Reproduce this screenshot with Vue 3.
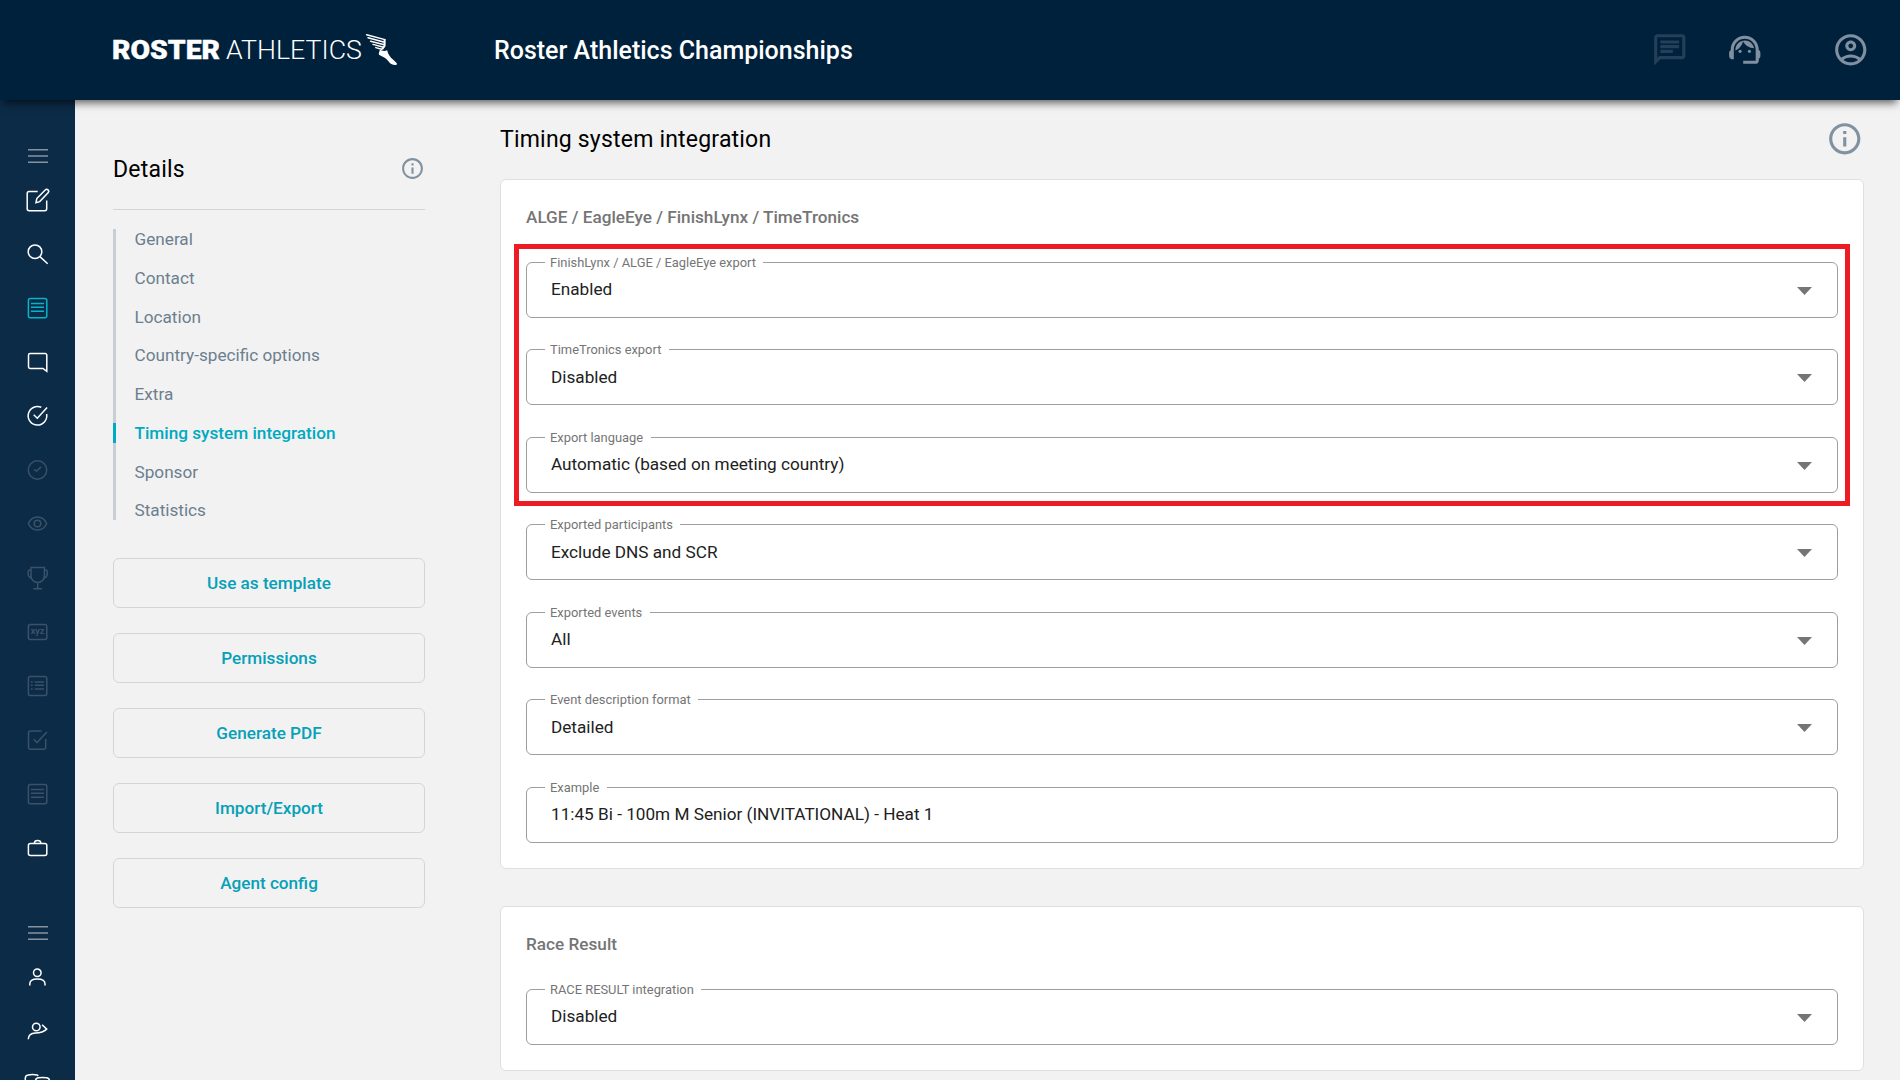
<template>
  <div class="app">
    <header class="topbar">
      <svg class="logo" width="290" height="40" viewBox="0 0 290 40" role="img" aria-label="Roster Athletics">
        <text class="logo-bold" x="-1" y="29.3" textLength="108" lengthAdjust="spacingAndGlyphs">ROSTER</text>
        <text class="logo-light" x="113" y="29.3" textLength="136" lengthAdjust="spacingAndGlyphs">ATHLETICS</text>
        <g transform="translate(253 4)">
          <path
            d="M.6.7 19 5.6M2 3.7l16.5 4.6M4.6 7.2l13.6 3.6M7 10.4l10.6 2.9M9.8 13.6l6 1.6"
            fill="none"
            stroke="#fff"
            stroke-width="1.5"
            stroke-linecap="round"
          />
          <path d="M18.6 5.4v6.4l-2.4 3.4" fill="none" stroke="#fff" stroke-width="2" />
          <path d="M14 15.8c2.4 1.4 5 1.5 7.2.4.6 4 3 7 6.4 9.8l3.2 3.2c.4 1.400-.6 2-2.200 1.800-3.200-.2-4.800-1.800-6.400-4-2.200-3-5.200-4-9.200-6.200-.8-1 .6-3.200.8-5z" fill="#fff" />
        </g>
      </svg>
      <h1 class="meeting-title">Roster Athletics Championships</h1>
      <nav class="topbar-actions">
        <svg class="top-icon dimmed" viewBox="0 0 24 24"><path :d="topIcons.chat" /></svg>
        <svg class="top-icon support" viewBox="0 0 24 24">
          <path :d="topIcons.support" />
          <circle cx="9" cy="13" r="1" />
          <circle cx="15" cy="13" r="1" />
        </svg>
        <svg class="top-icon" viewBox="0 0 24 24"><path :d="topIcons.account" /></svg>
      </nav>
    </header>

    <div class="body">
      <aside class="rail">
        <a v-for="(item, i) in railItems" :key="i" class="rail-item" :class="item.state">
          <svg width="30" height="30" viewBox="-0.5 0 30 30">
            <path :d="item.d" />
            <text v-if="item.text" x="15" y="17" text-anchor="middle">{{ item.text }}</text>
          </svg>
        </a>
      </aside>

      <section class="details">
        <div class="details-head">
          <h2>Details</h2>
          <svg class="info-small" viewBox="0 0 24 24"><path :d="topIcons.info" /></svg>
        </div>
        <ul class="details-nav">
          <li v-for="name in sections" :key="name" :class="{ active: name === activeSection }">
            <a>{{ name }}</a>
          </li>
        </ul>
        <div class="details-actions">
          <button v-for="action in actions" :key="action" type="button">{{ action }}</button>
        </div>
      </section>

      <main class="content">
        <div class="content-head">
          <h2>{{ activeSection }}</h2>
          <svg class="info-large" viewBox="0 0 24 24"><path :d="topIcons.info" /></svg>
        </div>

        <div v-for="card in cards" :key="card.title" class="card">
          <h3>{{ card.title }}</h3>
          <div class="fields">
            <div v-for="field in card.fields" :key="field.label" class="field">
              <label>{{ field.label }}</label>
              <span class="value">{{ field.value }}</span>
              <svg v-if="!field.readonly" class="arrow" width="15" height="8" viewBox="0 0 15 8">
                <path d="M0 0h15L7.5 8z" />
              </svg>
            </div>
          </div>
          <div v-if="card.highlight" class="highlight"></div>
        </div>
      </main>
    </div>
  </div>
</template>

<script setup>
import { ref } from "vue";

const activeSection = ref("Timing system integration");

const sections = [
  "General",
  "Contact",
  "Location",
  "Country-specific options",
  "Extra",
  "Timing system integration",
  "Sponsor",
  "Statistics",
];

const actions = ["Use as template", "Permissions", "Generate PDF", "Import/Export", "Agent config"];

const cards = [
  {
    title: "ALGE / EagleEye / FinishLynx / TimeTronics",
    highlight: true,
    fields: [
      { label: "FinishLynx / ALGE / EagleEye export", value: "Enabled" },
      { label: "TimeTronics export", value: "Disabled" },
      { label: "Export language", value: "Automatic (based on meeting country)" },
      { label: "Exported participants", value: "Exclude DNS and SCR" },
      { label: "Exported events", value: "All" },
      { label: "Event description format", value: "Detailed" },
      { label: "Example", value: "11:45 Bi - 100m M Senior (INVITATIONAL) - Heat 1", readonly: true },
    ],
  },
  {
    title: "Race Result",
    fields: [{ label: "RACE RESULT integration", value: "Disabled" }],
  },
];

const circle = (cx, cy, r) => `M${cx - r} ${cy}a${r} ${r} 0 1 0 ${2 * r} 0a${r} ${r} 0 1 0 ${-2 * r} 0z`;
const box = (x, y, w, h, r = 2) =>
  `M${x + r} ${y}h${w - 2 * r}a${r} ${r} 0 0 1 ${r} ${r}v${h - 2 * r}a${r} ${r} 0 0 1 ${-r} ${r}` +
  `h${2 * r - w}a${r} ${r} 0 0 1 ${-r} ${-r}v${2 * r - h}a${r} ${r} 0 0 1 ${r} ${-r}z`;

const menuPath = "M5.5 8.7h20M5.5 15h20M5.5 21.3h20";
const sheetPath = box(5.9, 5.6, 18.4, 19.2) + "M8.5 10.5h13M8.5 14.2h13M8.5 18.3h13";

const railItems = [
  { state: "menu", d: menuPath },
  {
    d: "M15.2 6.5H6.6a1.9 1.9 0 0 0-1.9 1.9v15.4a1.9 1.9 0 0 0 1.9 1.9h15.7a1.9 1.9 0 0 0 1.9-1.9V15.5M13.5 17.7l.8-4.2L22.7 5a1.9 1.9 0 0 1 2.9 2.7L17.2 16.6z",
  },
  { d: circle(12.5, 12.7, 6.8) + "M17.4 17.6l7.8 7.1" },
  { state: "active", d: sheetPath },
  { d: "M24.3 24.3V8.2a1.6 1.6 0 0 0-1.6-1.6H7.6A1.6 1.6 0 0 0 6 8.2v11.6a1.6 1.6 0 0 0 1.6 1.6h12.8z" },
  { d: "M18.8 6.3A9.3 9.3 0 1 0 24.1 13M11.2 13.8l3.6 3.4L24.6 6.6" },
  { state: "disabled", d: circle(15, 15, 9.2) + "M11.5 14.5l2.8 1.6 4.3-4.3" },
  {
    state: "disabled",
    d: circle(15, 14.5, 3.3) + "M5.8 14.5c1.8-4 5-6.5 9.2-6.5s7.4 2.5 9.2 6.5c-1.8 4-5 6.5-9.2 6.5s-7.4-2.5-9.2-6.5z",
  },
  {
    state: "disabled",
    d: "M8.5 4.5h13.4v8c0 4-2.8 7-6.7 7s-6.7-3-6.7-7zM15.2 19.5v6.3M10.8 25.8h8.8M8.5 7H6.7C5 7 5 14.7 8.7 14.7M21.9 7h1.8c1.7 0 1.7 7.7-2 7.7",
  },
  { state: "disabled", d: box(5.9, 7.4, 18.4, 15.2), text: "xyz" },
  {
    state: "disabled",
    d: box(5.9, 5.4, 18.4, 19.2) + "M8.5 11h1.7M12.2 11h9.3M8.5 14.3h1.7M12.2 14.3h9.3M8.5 17.9h1.7M12.2 17.9h9.3",
  },
  {
    state: "disabled",
    d: "M19.2 6H8a2 2 0 0 0-2 2v14.3a2 2 0 0 0 2 2h13.2a2 2 0 0 0 2-2V14M11.2 14.2l3.3 3.4L24.4 7",
  },
  { state: "disabled", d: sheetPath },
  { d: box(5.9, 10.4, 18.4, 12.2) + "M11.8 10.2c.2-3.6 6.4-3.6 6.6 0" },
  { state: "menu second", d: menuPath },
  { d: circle(14.8, 10.8, 3.8) + "M7.3 23.5v-1.6c0-3.2 3-4.9 7.5-4.9s7.7 1.7 7.7 4.9v1.6" },
  { d: circle(13.8, 11, 3.8) + "M5.8 23.3c0-4.5 3.2-6 7.2-6.2 6-.2 8.5-1.4 11.2-4L19.6 8.7" },
  { d: "M2.8 11V8.2c0-2 1-3.1 2.8-3.3 2.9-.4 6-.4 9 0l1.2 1M13 13v-2c0-2 1-3 3-3.2 2.6-.3 5.4-.3 8 0 2 .2 3 1.2 3 3.2v2" },
];

const topIcons = {
  chat: "M4 4h16v12H5.17L4 17.17V4m0-2c-1.1 0-1.99.9-1.99 2L2 22l4-4h14c1.1 0 2-.9 2-2V4c0-1.1-.9-2-2-2H4zm2 10h8v2H6v-2zm0-3h12v2H6V9zm0-3h12v2H6V6z",
  support:
    "M21 12.22C21 6.73 16.74 3 12 3c-4.69 0-9 3.65-9 9.28-.6.34-1 .98-1 1.72v2c0 1.1.9 2 2 2h1v-6.1c0-3.87 3.13-7 7-7s7 3.13 7 7V19h-8v2h8c1.1 0 2-.9 2-2v-1.22c.59-.31 1-.92 1-1.64v-2.3c0-.7-.41-1.31-1-1.62zM18 11.03C17.52 8.18 15.04 6 12.05 6c-3.03 0-6.29 2.51-6.03 6.45 2.47-1.01 4.33-3.21 4.86-5.89 1.31 2.63 4 4.44 7.12 4.47z",
  account:
    "M12 2C6.48 2 2 6.48 2 12s4.48 10 10 10 10-4.48 10-10S17.52 2 12 2zM7.35 18.5C8.66 17.56 10.26 17 12 17s3.34.56 4.65 1.5c-1.31.94-2.91 1.5-4.65 1.5s-3.34-.56-4.65-1.5zm10.79-1.38C16.45 15.8 14.32 15 12 15s-4.45.8-6.14 2.12C4.7 15.73 4 13.95 4 12c0-4.42 3.58-8 8-8s8 3.58 8 8c0 1.95-.7 3.73-1.86 5.12zM12 6c-1.93 0-3.5 1.57-3.5 3.5S10.07 13 12 13s3.5-1.57 3.5-3.5S13.93 6 12 6zm0 5c-.83 0-1.5-.67-1.5-1.5S11.17 8 12 8s1.5.67 1.5 1.5S12.83 11 12 11z",
  info: "M11 7h2v2h-2zm0 4h2v6h-2zm1-9C6.48 2 2 6.48 2 12s4.48 10 10 10 10-4.48 10-10S17.52 2 12 2zm0 18c-4.41 0-8-3.59-8-8s3.59-8 8-8 8 3.59 8 8-3.59 8-8 8z",
};
</script>

<style>
body {
  margin: 0;
  overflow: hidden;
}
</style>

<style scoped>
.app {
  height: 1080px;
  overflow: hidden;
  display: flex;
  flex-direction: column;
  background: #f2f2f2;
  font-family: Roboto, "Liberation Sans", sans-serif;
  color: #000;
}

h1,
h2,
h3,
ul {
  margin: 0;
  padding: 0;
  font-weight: 400;
}

.topbar {
  position: relative;
  z-index: 1;
  flex: none;
  height: 100px;
  box-sizing: border-box;
  padding-left: 113px;
  padding-right: 31px;
  display: flex;
  align-items: center;
  background: #00213b;
  box-shadow: 0 6px 8px -3px rgba(0, 0, 0, 0.6);
}

.logo {
  flex: none;
  width: 290px;
  height: 40px;
  margin-right: 91px;
  overflow: visible;
}

.logo text {
  fill: #fff;
  font-size: 26.7px;
}

.logo .logo-bold {
  font-weight: 900;
  stroke: #fff;
  stroke-width: 0.4;
}

.logo .logo-light {
  font-weight: 300;
}

.meeting-title {
  font-size: 25px;
  font-weight: 500;
  color: #fff;
}

.topbar-actions {
  margin-left: auto;
  display: flex;
  align-items: center;
}

.top-icon {
  width: 37.5px;
  height: 37.5px;
  margin-left: 37.5px;
  fill: #8090a0;
}

.top-icon.dimmed {
  fill: #243f58;
}

.top-icon.support {
  margin-right: 31px;
}

.body {
  flex: 1;
  min-height: 0;
  display: flex;
}

.rail {
  flex: none;
  width: 75px;
  box-sizing: border-box;
  padding-top: 39px;
  padding-right: 1px;
  display: flex;
  flex-direction: column;
  align-items: center;
  background: #0c2b46;
}

.rail-item {
  flex: none;
  height: 54px;
  display: flex;
  align-items: center;
}

.rail-item svg {
  fill: none;
  stroke: #fff;
  stroke-width: 1.5;
}

.rail-item text {
  font-size: 9px;
  font-weight: 700;
  stroke: none;
  fill: #3a5269;
}

.rail-item.menu {
  height: 34px;
}

.rail-item.menu svg {
  stroke: #8593a1;
}

.rail-item.second {
  margin-top: 41px;
}

.rail-item.active svg {
  stroke: #00b5cc;
}

.rail-item.disabled svg {
  stroke: #3a5269;
}

.details {
  flex: none;
  width: 312px;
  margin-left: 38px;
}

.details-head {
  height: 110px;
  box-sizing: border-box;
  padding-top: 28px;
  border-bottom: 1px solid #d2d4d6;
  display: flex;
  align-items: center;
  justify-content: space-between;
}

.details-head h2,
.content-head h2 {
  font-size: 23px;
  letter-spacing: 0.2px;
}

.details-head h2 {
  padding-top: 1px;
}

.info-small {
  width: 25px;
  height: 25px;
  fill: #8091a0;
}

.details-nav {
  list-style: none;
  margin-top: 19px;
  margin-bottom: -0.3px;
  padding-top: 0.3px;
  height: 291px;
  display: flex;
  flex-direction: column;
  justify-content: space-between;
  background: linear-gradient(#c9ced5, #c9ced5) left / 3px 100% no-repeat;
}

.details-nav li {
  height: 20px;
  line-height: 21px;
  padding-left: 18.5px;
  border-left: 3px solid transparent;
  font-size: 17.18px;
  color: #6c7f8f;
}

.details-nav li.active {
  border-left-color: #00a9c5;
  color: #00a9c1;
  font-weight: 500;
}

.details-actions {
  margin-top: 38px;
  display: flex;
  flex-direction: column;
  gap: 25px;
}

.details-actions button {
  height: 50px;
  border: 1px solid #d4d5d6;
  border-radius: 6px;
  background: transparent;
  color: #06a0b8;
  font-family: inherit;
  font-size: 17.15px;
  font-weight: 500;
}

.content {
  flex: 1;
  margin-left: 75px;
  padding-right: 36px;
}

.content-head {
  height: 79px;
  display: flex;
  align-items: center;
  justify-content: space-between;
}

.info-large {
  width: 37.5px;
  height: 37.5px;
  margin: 0 1px 2px 0;
  fill: #8091a0;
}

.card {
  position: relative;
  box-sizing: border-box;
  padding: 24px 25px 25.2px;
  margin-bottom: 37px;
  background: #fff;
  border: 1px solid #dfdfdf;
  border-radius: 6px;
}

.card h3 {
  height: 26px;
  line-height: 27px;
  font-size: 17.18px;
  font-weight: 500;
  color: #757575;
}

.fields {
  margin-top: 31.8px;
  display: flex;
  flex-direction: column;
  gap: 31.5px;
}

.field {
  position: relative;
  height: 56px;
  box-sizing: border-box;
  padding: 0 25px 0 24px;
  border: 1px solid #9e9e9e;
  border-radius: 6px;
  display: flex;
  align-items: center;
  justify-content: space-between;
}

.field label {
  position: absolute;
  top: -8.1px;
  left: 18px;
  padding: 0 7.5px 0 5px;
  background: #fff;
  color: #757575;
  font-size: 12.9px;
  line-height: 16px;
}

.value {
  font-size: 17.18px;
  line-height: 20px;
  padding-bottom: 1px;
  color: #212121;
}

.arrow {
  margin-top: 1.6px;
  fill: #757575;
}

/* callout frame around the export settings */
.highlight {
  position: absolute;
  left: 13px;
  right: 13px;
  top: 64px;
  height: 262px;
  box-sizing: border-box;
  border: 5px solid #ed1c24;
}
</style>
